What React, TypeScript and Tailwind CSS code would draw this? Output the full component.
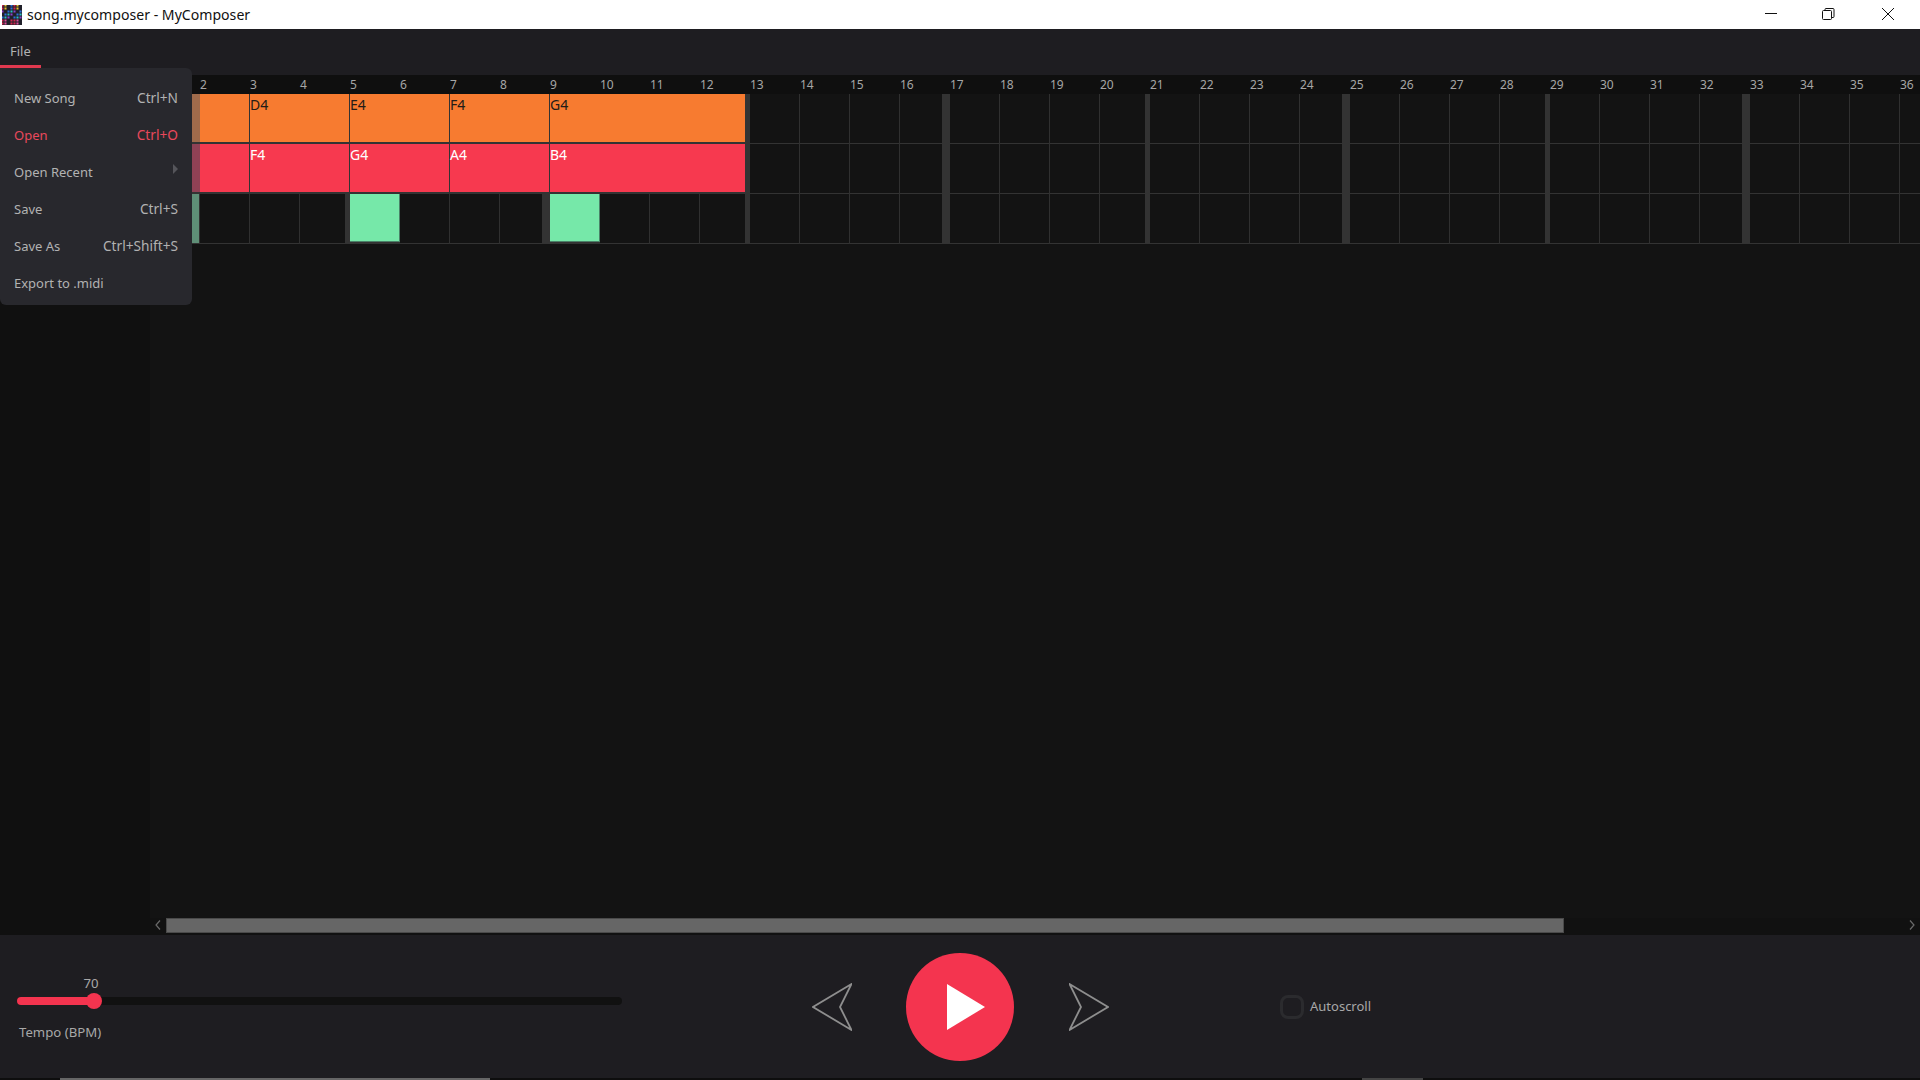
import React from "react";

const FONT = "font-['Noto_Sans','Open_Sans',sans-serif]";
const columns = Array.from({ length: 36 }, (_, i) => i + 1);
const emptyFrom13 = columns.filter((c) => c >= 13);

function barWidthBefore(next: number): number {
  if (next % 4 !== 1) return 1;
  return next % 8 === 5 ? 5 : 8;
}

function Cell({ col }: { col: number }) {
  const w = barWidthBefore(col + 1);
  return (
    <div className="flex h-[50px] w-[50px] shrink-0">
      <div className="h-full flex-1 border-b border-[#333333] bg-[#131313]" />
      {w === 1 ? <div className="h-full w-px bg-[#303030]" /> : w === 5 ? <div className="h-full w-[5px] bg-[#333333]" /> : <div className="h-full w-[8px] bg-[#333333]" />}
    </div>
  );
}

function GreenCell() {
  return (
    <div className="h-[50px] w-[50px] shrink-0 border-b-2 border-[#333333]">
      <div className="h-full w-full border-r border-b border-[#4a8268] bg-[#76e8a9]" />
    </div>
  );
}

function Note({ label, width, tone, last }: { label?: string; width: string; tone: "orange" | "red"; last?: boolean }) {
  const toneClass = tone === "orange" ? "bg-[#f77b30] text-[#231c17]" : "bg-[#f7394f] text-white";
  return (
    <div className={`flex h-[50px] shrink-0 border-b-2 border-[#333333] ${width}`}>
      <div className={`flex-1 pt-px text-[14px] leading-[20px] ${toneClass}`}>{label}</div>
      {last ? <div className="h-[50px] w-[5px] bg-[#333333]" /> : <div className="w-px bg-[#333333]" />}
    </div>
  );
}

function NoteRow({ tone, labels }: { tone: "orange" | "red"; labels: string[] }) {
  return (
    <div className="flex h-[50px]">
      <div className={`h-[50px] w-[50px] shrink-0 border-b-2 border-[#333333] ${tone === "orange" ? "bg-[#a06b4b]" : "bg-[#904155]"}`} />
      <Note width="w-[50px]" tone={tone} />
      <Note width="w-[100px]" tone={tone} label={labels[0]} />
      <Note width="w-[100px]" tone={tone} label={labels[1]} />
      <Note width="w-[100px]" tone={tone} label={labels[2]} />
      <Note width="w-[200px]" tone={tone} label={labels[3]} last />
      {emptyFrom13.map((c) => (
        <Cell key={c} col={c} />
      ))}
    </div>
  );
}

function BeatRow() {
  return (
    <div className="flex h-[50px]">
      <div className="flex h-[50px] w-[50px] shrink-0 border-b border-[#333333]">
        <div className="flex-1 bg-[#5f8f77]" />
        <div className="w-px bg-[#333333]" />
      </div>
      {columns
        .filter((c) => c >= 2)
        .map((c) => (c === 5 || c === 9 ? <GreenCell key={c} /> : <Cell key={c} col={c} />))}
    </div>
  );
}

const iconColors = ["#d6244e", "#e8c22a", "#2a6fe0", "#28c0c8", "#8a3fd0", "#e04a9a", "#1f1f2a", "#2fbf6a", "#1f1f2a"];

function AppIcon() {
  const cells = [];
  for (let y = 0; y < 7; y++) {
    for (let x = 0; x < 7; x++) {
      const band = y < 2 ? [0, 1, 6, 2][x % 4] : y < 5 ? [2, 3, 4, 6][(x + y) % 4] : [0, 5, 6, 0][x % 4];
      cells.push(<rect key={`${x}-${y}`} x={x * 3 - 0.5} y={y * 3 - 0.5} width="2" height="2" fill={iconColors[band]} />);
    }
  }
  return (
    <svg width="20" height="20" viewBox="0 0 20 20" className="ml-[2px] shrink-0">
      <rect width="20" height="20" fill="#23232b" />
      {cells}
    </svg>
  );
}

function WindowButtons() {
  return (
    <div className="mb-[2px] ml-auto flex items-center">
      <svg width="14" height="14" viewBox="0 0 14 14" className="mr-[43px]" fill="none" stroke="#111" strokeWidth="1">
        <path d="M1 6.5H13" />
      </svg>
      <svg width="14" height="14" viewBox="0 0 14 14" className="mr-[46px]" fill="none" stroke="#111" strokeWidth="1">
        <rect x="1.5" y="3.5" width="9" height="9" rx="1" />
        <path d="M4 3.5V2.5a1 1 0 0 1 1-1h7a1 1 0 0 1 1 1v7a1 1 0 0 1-1 1h-1" />
      </svg>
      <svg width="14" height="14" viewBox="0 0 14 14" className="mr-[25px]" fill="none" stroke="#111" strokeWidth="1">
        <path d="M1 1L13 13M13 1L1 13" />
      </svg>
    </div>
  );
}

const menuItems: { label: string; shortcut?: string; active?: boolean; submenu?: boolean }[] = [
  { label: "New Song", shortcut: "Ctrl+N" },
  { label: "Open", shortcut: "Ctrl+O", active: true },
  { label: "Open Recent", submenu: true },
  { label: "Save", shortcut: "Ctrl+S" },
  { label: "Save As", shortcut: "Ctrl+Shift+S" },
  { label: "Export to .midi" },
];

function FileMenu() {
  return (
    <div className="absolute left-0 top-[39px] z-10 w-[192px] rounded-b-md rounded-tr-md bg-[#28282d] pt-3 pb-[3px] text-[13px]">
      {menuItems.map((m) => (
        <div key={m.label} className={`flex h-[37px] items-center justify-between pl-[14px] pr-[14px] ${m.active ? "text-[#e8485c]" : "text-[#b2b2b2]"}`}>
          <span>{m.label}</span>
          {m.shortcut && <span className="text-[13.7px]">{m.shortcut}</span>}
          {m.submenu && (
            <svg width="5" height="10" viewBox="0 0 5 10" className="mb-[8px]">
              <path d="M0 0L5 5L0 10Z" fill="#55555a" />
            </svg>
          )}
        </div>
      ))}
    </div>
  );
}

function Scrollbar() {
  return (
    <div className="flex h-[17px] shrink-0 items-start bg-[#111111]">
      <div className="flex w-[16px] justify-center pt-[2px]">
        <svg width="6" height="10" viewBox="0 0 6 10" fill="none" stroke="#6a6a6a" strokeWidth="1.2">
          <path d="M5 0.5L1 5L5 9.5" />
        </svg>
      </div>
      <div className="h-[15px] w-[1398px] border border-[#4a4a4a] bg-[#666666]" />
      <div className="ml-auto flex w-[16px] justify-center pt-[2px]">
        <svg width="6" height="10" viewBox="0 0 6 10" fill="none" stroke="#6a6a6a" strokeWidth="1.2">
          <path d="M1 0.5L5 5L1 9.5" />
        </svg>
      </div>
    </div>
  );
}

function TempoSlider() {
  return (
    <div className="ml-[17px] flex w-[605px] shrink-0 flex-col pt-[2px] text-[13.2px] text-[#a8a8a8]">
      <div className="h-5 w-[148px] text-center leading-5">70</div>
      <div className="relative mt-1 h-2 rounded-full bg-[#111111]">
        <div className="h-2 w-[77px] rounded-full bg-[#f4344f]" />
        <div className="absolute left-[69px] top-[-4px] h-4 w-4 rounded-full bg-[#f4344f]" />
      </div>
      <div className="mt-[17px] pl-[2px] leading-5">Tempo (BPM)</div>
    </div>
  );
}

function Transport() {
  return (
    <div className="ml-[190px] flex shrink-0 items-center">
      <svg width="40" height="48" viewBox="0 0 40 48" fill="none" stroke="#8e8e8e" strokeWidth="1.8">
        <path d="M39.5 1L1 24L39.5 47L28 24Z" />
      </svg>
      <div className="ml-[54px] flex h-[108px] w-[108px] items-center justify-center rounded-full bg-[#f4344f]">
        <svg width="38" height="46" viewBox="0 0 38 46" className="ml-[11px]">
          <path d="M0 0L38 23L0 46Z" fill="#ffffff" />
        </svg>
      </div>
      <svg width="40" height="48" viewBox="0 0 40 48" fill="none" stroke="#8e8e8e" strokeWidth="1.8" className="ml-[55px]">
        <path d="M0.5 1L39 24L0.5 47L12 24Z" />
      </svg>
    </div>
  );
}

export default function App() {
  return (
    <div className={`flex h-screen w-screen flex-col overflow-hidden bg-[#131313] ${FONT}`}>
      <div className="flex h-[29px] shrink-0 items-center bg-white">
        <AppIcon />
        <span className="ml-[5px] text-[14.1px] text-[#111111]">song.mycomposer - MyComposer</span>
        <WindowButtons />
      </div>

      <div className="relative h-[46px] shrink-0 bg-[#1e1d21]">
        <div className="h-[39px] w-[41px] border-b-[3px] border-[#e0394f] pt-[11px] pl-[10px] text-[13px] leading-[22px] text-[#b2b2b2]">File</div>
        <FileMenu />
      </div>

      <div className="flex min-h-0 flex-1">
        <div className="w-[150px] shrink-0 bg-[#101010]" />
        <div className="flex min-w-0 flex-1 flex-col">
          <div className="min-h-0 flex-1 overflow-hidden">
            <div className="flex h-[19px] bg-[#0f0f0f]">
              {columns.map((c) => (
                <div key={c} className="w-[50px] shrink-0 text-[12px] leading-[20px] text-[#a6a6a6]">
                  {c === 1 ? "" : c}
                </div>
              ))}
            </div>
            <NoteRow tone="orange" labels={["D4", "E4", "F4", "G4"]} />
            <NoteRow tone="red" labels={["F4", "G4", "A4", "B4"]} />
            <BeatRow />
          </div>
          <Scrollbar />
        </div>
      </div>

      <div className="flex h-[143px] shrink-0 items-center bg-[#1e1d21]">
        <TempoSlider />
        <Transport />
        <div className="ml-[171px] h-6 w-6 shrink-0 rounded-lg border-[3px] border-[#2b2b2e]" />
        <span className="ml-[6px] pt-px text-[13px] text-[#a8a8a8]">Autoscroll</span>
      </div>

      <div className="flex h-[2px] shrink-0 bg-[#0e0e0e]">
        <div className="ml-[60px] w-[430px] bg-[#666666]" />
        <div className="ml-[872px] w-[61px] bg-[#444444]" />
      </div>
    </div>
  );
}
